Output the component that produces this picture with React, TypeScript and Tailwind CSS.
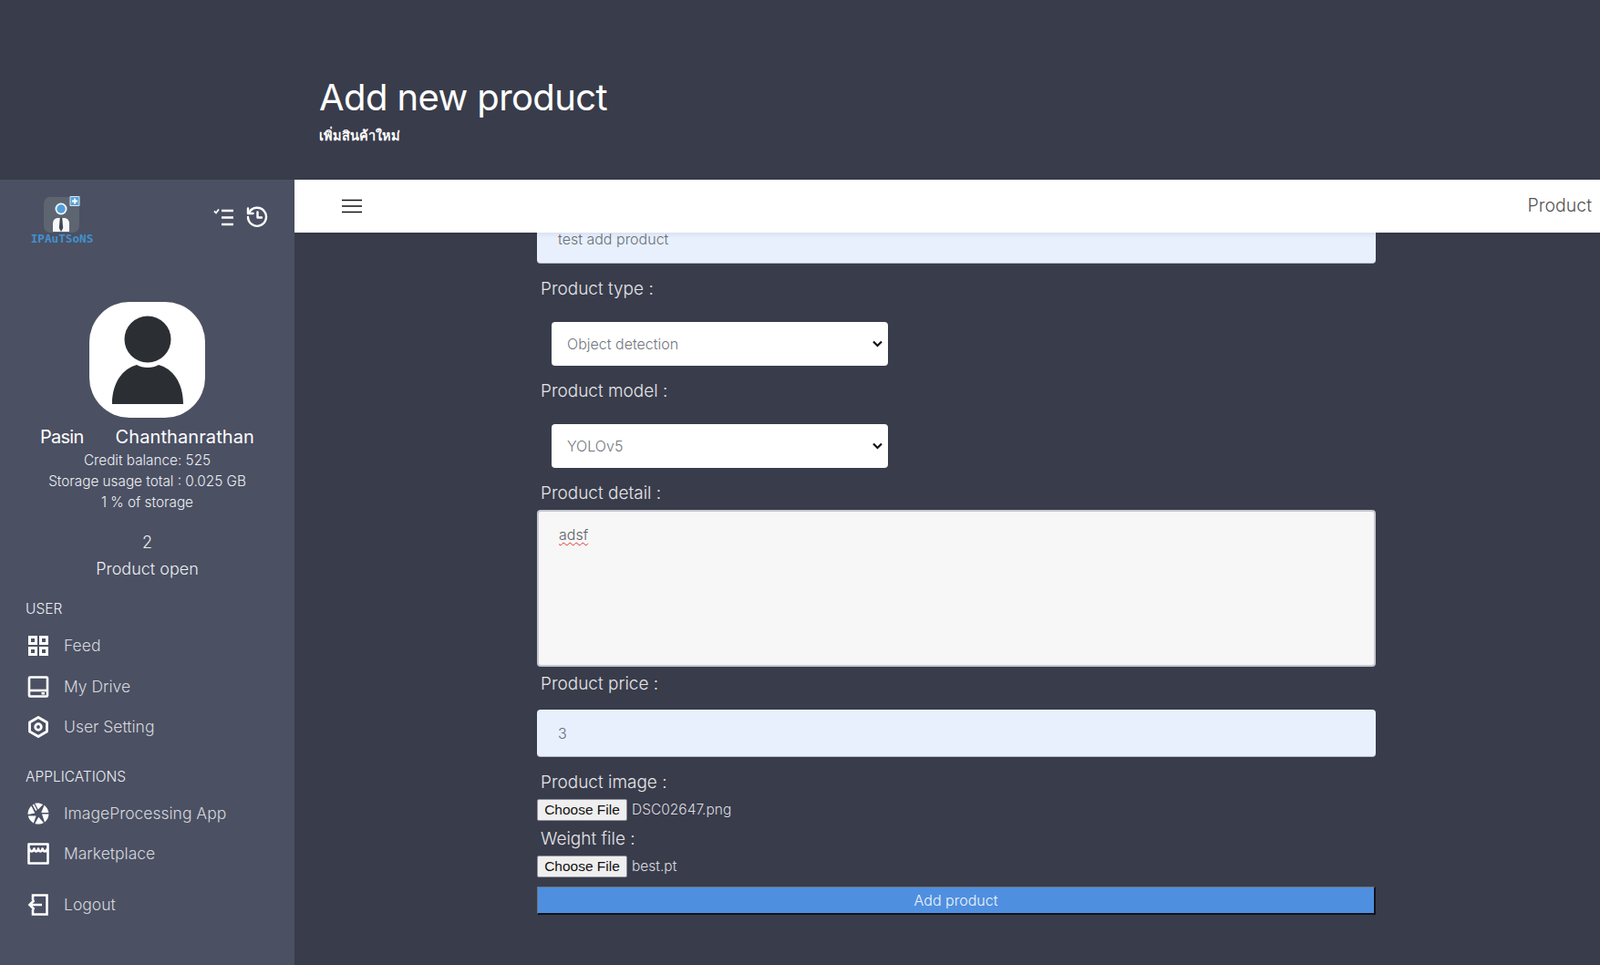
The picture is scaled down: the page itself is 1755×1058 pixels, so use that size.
const font = "font-['Inter','Noto_Sans','Noto_Sans_CJK_SC',sans-serif]";

function LogoMark() {
  return (
    <div className="flex flex-col items-center w-[72px]">
      <svg width="42" height="40" viewBox="0 0 42 40">
        <rect x="1" y="1" width="39" height="39" rx="7" fill="#5d6570" />
        <circle cx="20" cy="14" r="6.500" fill="#f4f6f8" />
        <circle cx="20" cy="14" r="4.700" fill="#4f9fdc" />
        <path d="M11 39V30c0-4 3-6 5.500-6h7c2.500 0 5.500 2 5.500 6v9z" fill="#f6f7f8" />
        <path d="M18.800 24h2.400l1 11-2.200 4-2.200-4z" fill="#3f4650" />
        <rect x="29.500" y="0" width="11" height="11" rx="1" fill="#d5e6f3" />
        <rect x="30.500" y="1" width="9" height="9" fill="#58a3d8" />
        <path d="M35 2.500v6M32 5.500h6" stroke="#fff" strokeWidth="1.800" />
      </svg>
      <span className="font-['DejaVu_Sans_Mono',monospace] font-bold text-[12.700px] leading-[14px] text-[#4291cc]">IPAuTSoNS</span>
    </div>
  );
}

function TodoIcon() {
  return (
    <svg width="24" height="21" viewBox="0 0 24 21" fill="none" stroke="#fff" strokeWidth="2.400">
      <path d="M9 3h13M9 10.500h13M9 18h13" />
      <path d="M1 3.500l2 2 3-4" strokeWidth="1.800" />
    </svg>
  );
}

function HistoryIcon() {
  return (
    <svg width="24" height="24" viewBox="0 0 24 24" fill="none" stroke="#fff" strokeWidth="2.400" strokeLinecap="round" strokeLinejoin="round">
      <path d="M3.500 6.500A10 10 0 1 1 2 12" />
      <path d="M2 2.500V8h5.500" />
      <path d="M12.500 6.500v6h4.500" />
    </svg>
  );
}

function Avatar() {
  return (
    <div className="w-[127px] h-[127px] rounded-[44px] bg-white flex items-center justify-center">
      <svg width="80" height="98" viewBox="0 0 80 98">
        <circle cx="40" cy="26" r="25.500" fill="#2b2e33" />
        <path d="M1 97c0-24 12-39 27-43 6 4 18 4 24 0 15 4 27 19 27 43z" fill="#2b2e33" />
      </svg>
    </div>
  );
}

const iconClass = "w-[24px] h-[24px] shrink-0";

function FeedIcon() {
  return (
    <svg className={iconClass} viewBox="0 0 24 24" fill="none" stroke="#fff" strokeWidth="3">
      <rect x="2.500" y="2.500" width="7" height="7" />
      <rect x="14.500" y="2.500" width="7" height="7" />
      <rect x="2.500" y="14.500" width="7" height="7" />
      <rect x="14.500" y="14.500" width="7" height="7" />
    </svg>
  );
}

function DriveIcon() {
  return (
    <svg className={iconClass} viewBox="0 0 24 24" fill="none" stroke="#fff" strokeWidth="2.600">
      <rect x="2" y="1.500" width="20" height="21" rx="1" />
      <path d="M2 16h20" />
      <rect x="15.500" y="18" width="3.500" height="2.500" fill="#fff" stroke="none" />
    </svg>
  );
}

function SettingIcon() {
  return (
    <svg className={iconClass} viewBox="0 0 24 24" fill="none" stroke="#fff" strokeWidth="2.800" strokeLinejoin="round">
      <path d="M12 1.500l9.500 5.500v10L12 22.500 2.500 17V7z" />
      <circle cx="12" cy="12" r="3.300" />
    </svg>
  );
}

function ApertureIcon() {
  return (
    <svg className={iconClass} viewBox="0 0 24 24" fill="#fff">
      <path d="M8.200.800c3-.8 6.300-.4 9 1.200L11.800 7.400z" />
      <path d="M18.500 2.800c2.700 2 4.500 5.200 4.900 8.200h-8.200z" />
      <path d="M23.500 12.600c-.1 3.600-1.800 6.700-4.500 8.800l-3-8.800z" />
      <path d="M17.800 22.100c-3 1.700-6.400 1.900-9.500.9l4-7.300z" />
      <path d="M6.800 22.400C3.700 20.800 1.500 17.800.8 14.600h8.800z" />
      <path d="M.6 13C.4 9.400 1.800 6 4.400 3.600l3.900 7.900z" />
      <path d="M5.700 2.600l1.500-1.100 3.300 6.200-1.200 1.500z" />
    </svg>
  );
}

function MarketIcon() {
  return (
    <svg className={iconClass} viewBox="0 0 24 24" fill="none" stroke="#fff" strokeLinejoin="round">
      <path d="M1.500 1.500h21v21h-21z" strokeWidth="2.600" />
      <path d="M2 6.500c1.500 4 4 4 5.500 0 1 4 3.500 4 4.500 0 1 4 3.500 4 4.500 0 1.500 4 4 4 5.500 0" strokeWidth="2.600" />
    </svg>
  );
}

function LogoutIcon() {
  return (
    <svg className={iconClass} viewBox="0 0 24 24" fill="none" stroke="#fff" strokeWidth="2.600" strokeLinejoin="miter">
      <path d="M6 7V1.500h15.500v21H6V17" />
      <path d="M16 12H2.500M7.500 7l-5 5 5 5" />
    </svg>
  );
}

function NavItem({ icon, label, className }: { icon: React.ReactNode; label: string; className?: string }) {
  return (
    <div className={`flex items-center gap-[16px] pl-[30px] h-[24px] text-[17.500px] font-light text-[#d5d7dc] ${className ?? ""}`}>
      {icon}
      <span>{label}</span>
    </div>
  );
}

function Sidebar() {
  return (
    <aside className="w-[323px] shrink-0 bg-[#4b5063] text-white flex flex-col">
      <div className="flex items-start justify-between pl-[32px] pr-[29px] pt-[18px] h-[134px]">
        <LogoMark />
        <div className="flex items-center gap-[12px] mt-[11px]">
          <TodoIcon />
          <HistoryIcon />
        </div>
      </div>
      <div className="flex flex-col items-center">
        <Avatar />
        <div className="flex gap-[35px] mt-[9px] text-[20px] leading-[24px] font-normal">
          <span className="tracking-[-0.75px]">Pasin</span>
          <span className="tracking-[0.1px]">Chanthanrathan</span>
        </div>
        <p className="mt-[2px] text-[15.300px] leading-[23px] font-light text-[#eceef1] text-center">
          Credit balance: 525
          <br />
          Storage usage total : 0.025 GB
          <br />1 % of storage
        </p>
        <p className="mt-[18px] text-[18px] leading-[29px] font-light text-[#eceef1] text-center">
          2
          <br />
          Product open
        </p>
      </div>
      <p className="pl-[28px] mt-[18px] text-[15.500px] leading-[24px] font-light text-[#eceef1]">USER</p>
      <NavItem className="mt-[16px]" icon={<FeedIcon />} label="Feed" />
      <NavItem className="mt-[21px]" icon={<DriveIcon />} label="My Drive" />
      <NavItem className="mt-[20px]" icon={<SettingIcon />} label="User Setting" />
      <p className="pl-[28px] mt-[31px] text-[15.500px] leading-[24px] font-light text-[#eceef1]">APPLICATIONS</p>
      <NavItem className="mt-[16px]" icon={<ApertureIcon />} label="ImageProcessing App" />
      <NavItem className="mt-[20px]" icon={<MarketIcon />} label="Marketplace" />
      <NavItem className="mt-[32px]" icon={<LogoutIcon />} label="Logout" />
    </aside>
  );
}

function FieldLabel({ children, className }: { children: React.ReactNode; className?: string }) {
  return <p className={`pl-[4px] text-[19px] leading-[24px] font-light text-[#e4e5e9] ${className ?? ""}`}>{children}</p>;
}

function SelectBox({ value }: { value: string }) {
  return (
    <div className="relative ml-[16px] mt-[24px] w-[369px] h-[48px]">
      <select className="block w-full h-full appearance-none rounded-[4px] bg-white pl-[17px] pb-[1px] text-[16px] font-light text-[#73767d]">
        <option>{value}</option>
      </select>
      <svg className="absolute right-[6px] top-[20px]" width="11" height="8" viewBox="0 0 11 8" fill="none" stroke="#111" strokeWidth="2.200">
        <path d="M1 1.500l4.500 4.500 4.500-4.500" />
      </svg>
    </div>
  );
}

function FileRow({ name, className }: { name: string; className?: string }) {
  return (
    <div className={`flex items-center gap-[5px] h-[24px] ${className ?? ""}`}>
      <button className="w-[99px] h-[24px] bg-[#efefef] rounded-[2px] border border-[#8f8f9d] text-[#111] text-[15.500px] leading-none font-['Liberation_Sans',sans-serif]">
        Choose File
      </button>
      <span className="text-[15.500px] font-light text-[#d9dbe0]">{name}</span>
    </div>
  );
}

function ProductForm() {
  return (
    <div className="w-[920px] ml-[266px] -mt-[18px]">
      <input
        readOnly
        value="test add product"
        className="w-full h-[52px] rounded-[4px] border-b border-[#b9bcc6] bg-[#e8f0fe] pl-[23px] pb-[2px] text-[16px] font-light text-[#6b6f78] outline-none"
      />
      <FieldLabel className="mt-[16px]">Product type :</FieldLabel>
      <SelectBox value="Object detection" />
      <FieldLabel className="mt-[16px]">Product model :</FieldLabel>
      <SelectBox value="YOLOv5" />
      <FieldLabel className="mt-[16px]">Product detail :</FieldLabel>
      <div className="mt-[6px] h-[172px] rounded-[4px] border-2 border-[#c6c8d0] bg-[#f7f7f7] pl-[22px] pt-[13px] text-[16px] font-light text-[#5c5f66]">
        <span className="underline decoration-wavy decoration-[#e0342f] decoration-1 underline-offset-2">adsf</span>
      </div>
      <FieldLabel className="mt-[7px]">Product price :</FieldLabel>
      <input
        readOnly
        value="3"
        className="block mt-[16px] w-full h-[52px] rounded-[4px] border-b border-[#b9bcc6] bg-[#e8f0fe] pl-[23px] text-[16px] font-light text-[#6b6f78] outline-none"
      />
      <FieldLabel className="mt-[16px]">Product image :</FieldLabel>
      <FileRow className="mt-[6px]" name="DSC02647.png" />
      <FieldLabel className="mt-[8px]">Weight file :</FieldLabel>
      <FileRow className="mt-[6px]" name="best.pt" />
      <button className="block mt-[10px] w-full h-[31px] bg-[#4f8fdf] border-t border-l border-[#6a7382] border-b-2 border-r-2 border-b-[#10131c] border-r-[#10131c] text-[16px] font-light text-[#eef3fb]">
        Add product
      </button>
    </div>
  );
}

export default function App() {
  return (
    <div className={`w-[1755px] h-[1058px] overflow-hidden bg-[#393c4a] flex flex-col ${font}`}>
      <header className="h-[197px] shrink-0 pl-[350px] pt-[82px] text-white">
        <h1 className="text-[40px] leading-[50px] font-normal tracking-[-0.6px]">Add new product</h1>
        <p className="mt-[7px] text-[14.500px] leading-[20px] font-semibold">เพิ่มสินค้าใหม่</p>
      </header>
      <div className="flex flex-1 min-h-0">
        <Sidebar />
        <main className="flex-1 min-w-0 flex flex-col">
          <nav className="relative z-10 h-[58px] shrink-0 bg-white flex items-center justify-between pl-[52px] pr-[9px] shadow-[0_2px_6px_rgba(0,0,0,0.08)]">
            <svg className="-mt-[1px]" width="22" height="16" viewBox="0 0 22 16" stroke="#111" strokeWidth="1.700">
              <path d="M0 1.500h22M0 8h22M0 14.500h22" />
            </svg>
            <span className="text-[19.500px] font-light text-[#555]">Product</span>
          </nav>
          <ProductForm />
        </main>
      </div>
    </div>
  );
}
